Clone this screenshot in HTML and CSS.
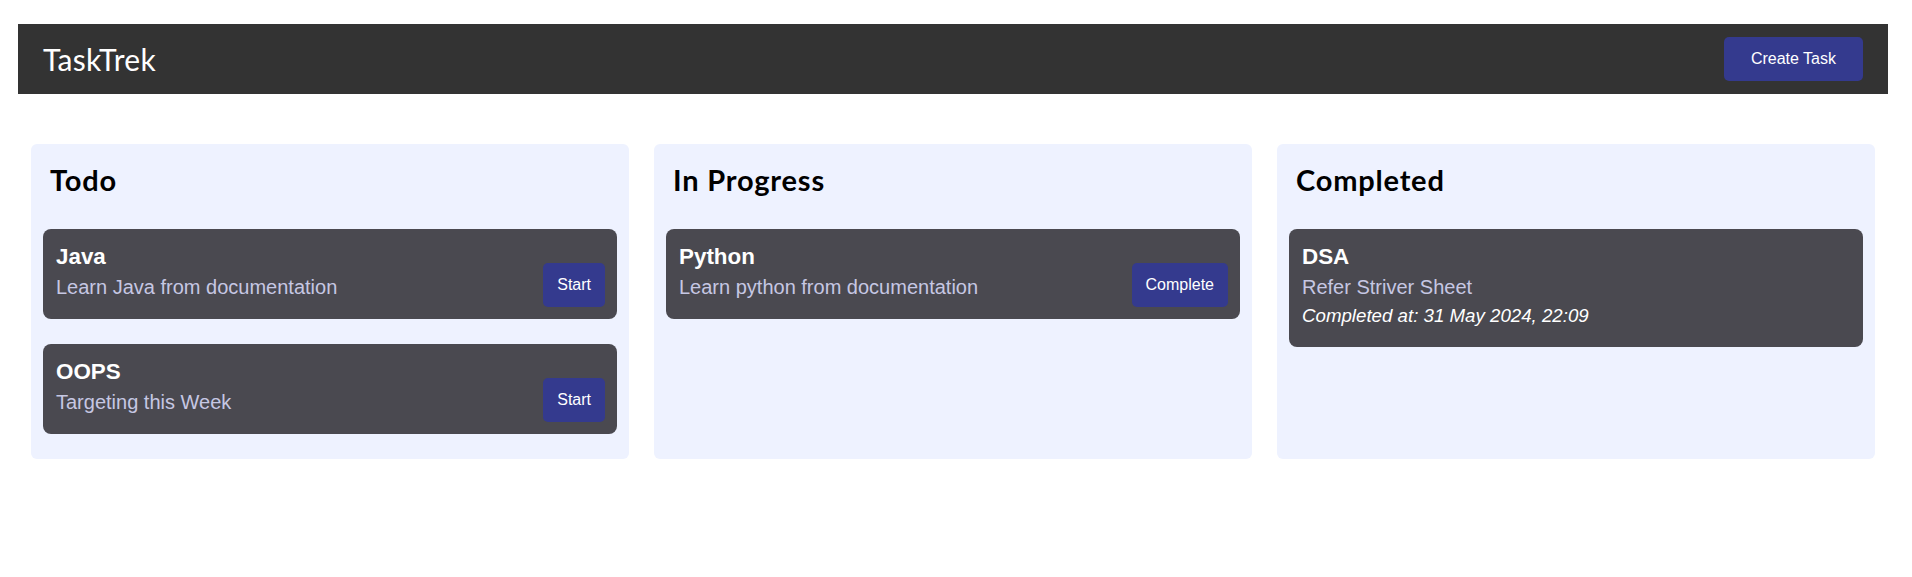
FILE: index.html
```html
<!DOCTYPE html>
<html lang="en">
<head>
<meta charset="utf-8">
<title>TaskTrek</title>
<link rel="stylesheet" href="styles.css">
</head>
<body>
<div class="app">
  <header class="topbar">
    <div class="brand">TaskTrek</div>
    <button class="btn btn-create">Create Task</button>
  </header>
  <main class="board">
    <section class="column">
      <h2 class="column-title">Todo</h2>
      <div class="cards">
        <div class="card">
          <div class="card-body">
            <h3 class="card-title">Java</h3>
            <p class="card-desc">Learn Java from documentation</p>
          </div>
          <button class="btn btn-action">Start</button>
        </div>
        <div class="card">
          <div class="card-body">
            <h3 class="card-title">OOPS</h3>
            <p class="card-desc">Targeting this Week</p>
          </div>
          <button class="btn btn-action">Start</button>
        </div>
      </div>
    </section>
    <section class="column">
      <h2 class="column-title">In Progress</h2>
      <div class="cards">
        <div class="card">
          <div class="card-body">
            <h3 class="card-title">Python</h3>
            <p class="card-desc">Learn python from documentation</p>
          </div>
          <button class="btn btn-action">Complete</button>
        </div>
      </div>
    </section>
    <section class="column">
      <h2 class="column-title">Completed</h2>
      <div class="cards">
        <div class="card">
          <div class="card-body">
            <h3 class="card-title">DSA</h3>
            <p class="card-desc">Refer Striver Sheet</p>
            <p class="card-done">Completed at: 31 May 2024, 22:09</p>
          </div>
        </div>
      </div>
    </section>
  </main>
</div>
</body>
</html>
```
FILE: styles.css
```css
* {
  box-sizing: border-box;
}

html, body {
  margin: 0;
  padding: 0;
  background: #ffffff;
}

body {
  font-family: "Liberation Sans", Arial, sans-serif;
}

.app {
  padding: 24px 24px 0 18px;
}

.topbar {
  height: 70px;
  background: #333333;
  display: flex;
  align-items: center;
  justify-content: space-between;
  padding: 0 25px;
}

.brand {
  font-family: Lato, "Open Sans", sans-serif;
  font-size: 30px;
  font-weight: 400;
  letter-spacing: 0.3px;
  color: #ffffff;
}

.btn {
  font-family: "Liberation Sans", Arial, sans-serif;
  font-size: 16px;
  line-height: 18px;
  color: #ffffff;
  background: #343a8e;
  border: none;
  border-radius: 5px;
  cursor: pointer;
}

.btn-create {
  padding: 13px 27px;
}

.board {
  display: grid;
  grid-template-columns: repeat(3, 1fr);
  gap: 25px;
  margin: 50px 13px 0 13px;
}

.column {
  background: #eef2ff;
  border-radius: 6px;
  padding: 12px 12px 25px 12px;
}

.column-title {
  font-family: Lato, "Open Sans", sans-serif;
  font-size: 29px;
  font-weight: 700;
  line-height: 35px;
  letter-spacing: 0.8px;
  color: #000000;
  margin: 6px 0 32px 7px;
}

.cards {
  display: flex;
  flex-direction: column;
  gap: 25px;
}

.card {
  background: #4a4950;
  border-radius: 8px;
  padding: 12px 12px 12px 13px;
  display: flex;
  justify-content: space-between;
  align-items: flex-end;
}

.card-body {
  padding: 3px 0 8px 0;
}

.card-title {
  font-size: 22.4px;
  font-weight: 700;
  line-height: 26px;
  color: #ffffff;
  margin: 0 0 5px 0;
}

.card-desc {
  font-size: 20px;
  line-height: 24px;
  color: #c6c7e3;
  margin: 0;
}

.card-done {
  font-size: 18.7px;
  line-height: 22px;
  font-style: italic;
  color: #ffffff;
  margin: 6px 0 0 0;
}

.btn-action {
  padding: 13px 14px;
}
```
